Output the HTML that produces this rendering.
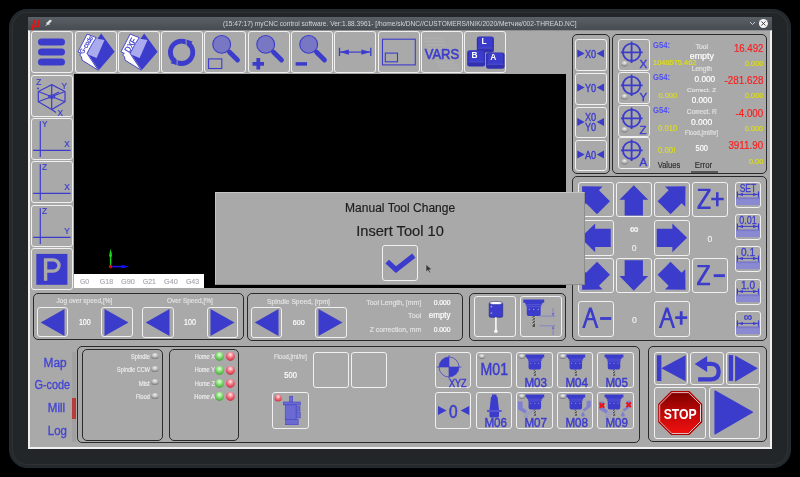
<!DOCTYPE html>
<html><head><meta charset="utf-8">
<style>
*{margin:0;padding:0;box-sizing:border-box}
html,body{width:800px;height:477px;overflow:hidden;background:#000;font-family:"Liberation Sans",sans-serif}
.a{position:absolute}
#frame{left:9px;top:9px;width:782px;height:459px;border-radius:18px;background:#232629;border:1px solid #1f2d36;box-shadow:inset 0 0 0 2px #26292c, inset 0 0 0 3px #2f3235}
#title{left:28px;top:17px;width:744px;height:13px;background:linear-gradient(#596066,#474c52)}
#content{left:28px;top:30px;width:744px;height:419px;background:#a9a9a9;border-left:2px solid #f0f0f0;border-right:2px solid #f0f0f0;border-bottom:2px solid #f0f0f0;border-top:1px solid #8e9092}
.b{position:absolute;border:1.5px solid #f0f0f0;border-radius:3px;background:#a9a9a9}
.p{position:absolute;border:1.6px solid #2a2a2a;border-radius:5px}
.s{position:absolute;overflow:visible;font-family:"Liberation Sans";will-change:transform}
</style></head><body>
<div id="frame" class="a"></div>
<div id="title" class="a"></div>
<div id="content" class="a"></div>
<svg width="0" height="0" style="position:absolute"><defs><radialGradient id="led" cx="0.5" cy="0.3" r="0.8"><stop offset="0" stop-color="#f2f2f2"/><stop offset="0.5" stop-color="#b4b4b4"/><stop offset="1" stop-color="#5a5a5a"/></radialGradient><radialGradient id="gled" cx="0.5" cy="0.3" r="0.75"><stop offset="0" stop-color="#e8ffe0"/><stop offset="0.5" stop-color="#7cd86c"/><stop offset="1" stop-color="#3a9a30"/></radialGradient><radialGradient id="rled" cx="0.5" cy="0.3" r="0.75"><stop offset="0" stop-color="#ffe8e8"/><stop offset="0.5" stop-color="#f06878"/><stop offset="1" stop-color="#c02838"/></radialGradient><linearGradient id="stopg" x1="0" y1="0" x2="0" y2="1"><stop offset="0" stop-color="#800000"/><stop offset="0.5" stop-color="#c00808"/><stop offset="1" stop-color="#f01010"/></linearGradient></defs></svg><svg class="s" style="left:28px;top:17px" width="30" height="13"><text x="3.8" y="9.9" font-family="Liberation Serif" font-style="italic" font-size="14.5" fill="#f01010" stroke="#f01010" stroke-width="0.45" textLength="8.4" lengthAdjust="spacingAndGlyphs">μ</text><path d="M17.6,9 L20.2,6.4" stroke="#e4e4e4" stroke-width="0.9"/><path d="M19.6,6.6 L22.4,3.9" stroke="#e4e4e4" stroke-width="2.4" stroke-linecap="round"/><path d="M18.9,5.3 L21.5,8" stroke="#e4e4e4" stroke-width="0.9"/></svg>
<svg class="s" style="left:745px;top:17px" width="27" height="13"><path d="M5,5 L7.5,7.5 L10,5" stroke="#c8ccd0" stroke-width="1" fill="none"/><circle cx="18.4" cy="6.5" r="4.5" fill="#f4f4f4"/><path d="M16.3,4.4 L20.5,8.6 M20.5,4.4 L16.3,8.6" stroke="#30343a" stroke-width="0.9"/></svg>
<div class="b" style="left:31px;top:31px;width:42px;height:42px"></div>
<svg class="s" style="left:31px;top:31px" width="42" height="42"><g stroke="#3c3ccc" stroke-width="7" stroke-linecap="round"><path d="M10.5,11 H30.5 M10.5,21 H30.5 M10.5,31 H30.5"/></g></svg>
<div class="b" style="left:74.5px;top:31px;width:42px;height:42px"></div>
<svg class="s" style="left:74.5px;top:31px" width="42" height="42"><path d="M26.2,2.5 L39.6,20.7 L23.9,39.1 L12.4,22z" fill="#3c3ccc"/><path d="M19.3,7.3 L29.5,9.1 L21.6,27.1 L12.4,23.2z" fill="#aaaaee"/><path d="M12.1,3.1 L21.2,6.6 L17.4,12.5 L12,22.4 L23.2,39.2 L7.2,29.3 L6.4,25.6 L4.6,24 L6.3,22.4 L3,20.8z" fill="#fff" stroke="#3c3ccc" stroke-width="0.9" stroke-linejoin="round"/><text transform="translate(11.2,13.6) rotate(-59)" x="0" y="2.52" text-anchor="middle" font-size="7" fill="#3c3ccc" stroke="#3c3ccc" stroke-width="0.25" textLength="19.5" lengthAdjust="spacingAndGlyphs">G-code</text></svg>
<div class="b" style="left:117.5px;top:31px;width:42px;height:42px"></div>
<svg class="s" style="left:117.5px;top:31px" width="42" height="42"><path d="M26.2,2.5 L39.6,20.7 L23.9,39.1 L12.4,22z" fill="#3c3ccc"/><path d="M19.3,7.3 L29.5,9.1 L21.6,27.1 L12.4,23.2z" fill="#aaaaee"/><path d="M12.1,3.1 L21.2,6.6 L17.4,12.5 L12,22.4 L23.2,39.2 L7.2,29.3 L6.4,25.6 L4.6,24 L6.3,22.4 L3,20.8z" fill="#fff" stroke="#3c3ccc" stroke-width="0.9" stroke-linejoin="round"/><text transform="translate(12.3,14.2) rotate(-59)" x="0" y="3.17" text-anchor="middle" font-size="8.8" fill="#3c3ccc" stroke="#3c3ccc" stroke-width="0.25" textLength="15" lengthAdjust="spacingAndGlyphs">DXF</text></svg>
<div class="b" style="left:161px;top:31px;width:42px;height:42px"></div>
<svg class="s" style="left:161px;top:31px" width="42" height="42"><circle cx="20.6" cy="21.3" r="11.2" fill="none" stroke="#3c3ccc" stroke-width="4.8"/><path d="M25.1,8.6 L31.6,10.4 L27,16.2z M16.1,34 L9.6,32.2 L14.2,26.4z" fill="#3c3ccc"/><path d="M25.1,8 L25.1,16 M16.1,26.6 L16.1,34.6" stroke="#a9a9a9" stroke-width="0.9"/></svg>
<div class="b" style="left:204px;top:31px;width:42px;height:42px"></div>
<svg class="s" style="left:204px;top:31px" width="42" height="42"><circle cx="17.7" cy="13.4" r="8.9" fill="#7777c4" stroke="#3c3ccc" stroke-width="1.1"/><path d="M25.4,21 L33.5,29" stroke="#3c3ccc" stroke-width="4.8" stroke-linecap="round"/><rect x="4.6" y="27.9" width="13.2" height="9.6" fill="none" stroke="#3c3ccc" stroke-width="1.1"/></svg>
<div class="b" style="left:248px;top:31px;width:42px;height:42px"></div>
<svg class="s" style="left:248px;top:31px" width="42" height="42"><circle cx="17.7" cy="13.4" r="8.9" fill="#7777c4" stroke="#3c3ccc" stroke-width="1.1"/><path d="M25.4,21 L33.5,29" stroke="#3c3ccc" stroke-width="4.8" stroke-linecap="round"/><path d="M4.5,32.9 H16 M10.3,27 V38.6" stroke="#3c3ccc" stroke-width="3.8"/></svg>
<div class="b" style="left:291px;top:31px;width:42px;height:42px"></div>
<svg class="s" style="left:291px;top:31px" width="42" height="42"><circle cx="17.7" cy="13.4" r="8.9" fill="#7777c4" stroke="#3c3ccc" stroke-width="1.1"/><path d="M25.4,21 L33.5,29" stroke="#3c3ccc" stroke-width="4.8" stroke-linecap="round"/><path d="M4.6,32.9 H16" stroke="#3c3ccc" stroke-width="3.5"/></svg>
<div class="b" style="left:334px;top:31px;width:42px;height:42px"></div>
<svg class="s" style="left:334px;top:31px" width="42" height="42"><path d="M5.5,16.8 V25 M36.8,16.8 V25" stroke="#3c3ccc" stroke-width="1.3"/><path d="M6,21.1 H36" stroke="#3c3ccc" stroke-width="1.2"/><path d="M5.8,21.1 L14.9,18.4 L14.9,23.8z M36.5,21.1 L27.4,18.4 L27.4,23.8z" fill="#3c3ccc"/></svg>
<div class="b" style="left:378px;top:31px;width:42px;height:42px"></div>
<svg class="s" style="left:378px;top:31px" width="42" height="42"><rect x="4.5" y="8.2" width="32.8" height="25.7" fill="none" stroke="#3c3ccc" stroke-width="1.1"/><rect x="7.3" y="22.1" width="12.2" height="8.7" fill="none" stroke="#3c3ccc" stroke-width="1.1"/></svg>
<div class="b" style="left:421px;top:31px;width:42px;height:42px"></div>
<svg class="s" style="left:421px;top:31px" width="42" height="42"><rect x="2.5" y="6.5" width="19" height="1.1" fill="#b1b1b1"/><rect x="4" y="10" width="19" height="1.1" fill="#b1b1b1"/><rect x="6" y="13.5" width="19" height="1.1" fill="#b1b1b1"/><rect x="8" y="17" width="18" height="1.1" fill="#b1b1b1"/><rect x="15" y="30.5" width="18" height="1.1" fill="#b1b1b1"/><rect x="17" y="33.5" width="19" height="1.1" fill="#b1b1b1"/><rect x="18.5" y="36.5" width="20" height="1.1" fill="#b1b1b1"/><text x="3.7" y="27.7" font-size="14.8" fill="#3c3ccc" stroke="#3c3ccc" stroke-width="0.6" textLength="34.4" lengthAdjust="spacingAndGlyphs">VARS</text></svg>
<div class="b" style="left:464px;top:31px;width:42px;height:42px"></div>
<svg class="s" style="left:464px;top:31px" width="42" height="42"><rect x="12.8" y="5.5" width="17.1" height="16.1" rx="2.5" fill="#3030b0"/><rect x="14.4" y="6.0" width="13.900000000000002" height="10.626000000000001" rx="1.5" fill="#3c3ccc"/><path d="M13.8,17.092 H28.900000000000002" stroke="#6a6ae0" stroke-width="0.6"/><text x="17.6" y="13" font-size="8.4" font-weight="bold" fill="#fff">L</text><rect x="3.2" y="19.3" width="18" height="16.1" rx="2.5" fill="#3030b0"/><rect x="4.800000000000001" y="19.8" width="14.8" height="10.626000000000001" rx="1.5" fill="#3c3ccc"/><path d="M4.2,30.892000000000003 H20.2" stroke="#6a6ae0" stroke-width="0.6"/><text x="7.4" y="26.9" font-size="8.4" font-weight="bold" fill="#fff">B</text><rect x="22" y="21.6" width="18.6" height="16.1" rx="2.5" fill="#3030b0"/><rect x="23.6" y="22.1" width="15.400000000000002" height="10.626000000000001" rx="1.5" fill="#3c3ccc"/><path d="M23,33.192 H39.6" stroke="#6a6ae0" stroke-width="0.6"/><text x="26.2" y="29" font-size="8.4" font-weight="bold" fill="#fff">A</text></svg>
<div class="b" style="left:31px;top:75px;width:42px;height:42px"></div>
<svg class="s" style="left:31px;top:75px" width="42" height="42"><g fill="none" stroke="#3c3ccc" stroke-width="1.2"><path d="M20.7,9.6 L34,16.5 L34,26.7 L20.7,34.5 L7.3,26.7 L7.3,16.5z"/><path d="M20.7,9.6 V34.5 M7.3,16.5 L34,26.7 M34,16.5 L7.3,26.7"/><ellipse cx="20.7" cy="21.6" rx="3" ry="1.6"/><path d="M20.7,34.5 L25,37.5"/><path d="M22,20 L28,17"/></g><circle cx="7" cy="13.5" r="0.9" fill="#3c3ccc"/><g fill="#3c3ccc" stroke="#3c3ccc" stroke-width="0.2"><text x="5.2" y="10" font-size="8.3">Z</text><text x="30.6" y="13.8" font-size="8.3">Y</text><text x="26.6" y="41" font-size="8.3">X</text></g></svg>
<div class="b" style="left:31px;top:118px;width:42px;height:42px"></div>
<svg class="s" style="left:31px;top:118px" width="42" height="42"><path d="M9.3,3.2 V39.1 M2.2,32.4 H39.6" stroke="#3c3ccc" stroke-width="1.2"/><text x="11.1" y="9.2" font-size="8.3" fill="#3c3ccc" stroke="#3c3ccc" stroke-width="0.2">Y</text><text x="33.2" y="29.4" font-size="8.3" fill="#3c3ccc" stroke="#3c3ccc" stroke-width="0.2">X</text></svg>
<div class="b" style="left:31px;top:161.2px;width:42px;height:42px"></div>
<svg class="s" style="left:31px;top:161.2px" width="42" height="42"><path d="M9.3,3.2 V39.1 M2.2,32.4 H39.6" stroke="#3c3ccc" stroke-width="1.2"/><text x="11.1" y="9.2" font-size="8.3" fill="#3c3ccc" stroke="#3c3ccc" stroke-width="0.2">Z</text><text x="33.2" y="29.4" font-size="8.3" fill="#3c3ccc" stroke="#3c3ccc" stroke-width="0.2">X</text></svg>
<div class="b" style="left:31px;top:204.7px;width:42px;height:42px"></div>
<svg class="s" style="left:31px;top:204.7px" width="42" height="42"><path d="M9.3,3.2 V39.1 M2.2,32.4 H39.6" stroke="#3c3ccc" stroke-width="1.2"/><text x="11.1" y="9.2" font-size="8.3" fill="#3c3ccc" stroke="#3c3ccc" stroke-width="0.2">Z</text><text x="33.2" y="29.4" font-size="8.3" fill="#3c3ccc" stroke="#3c3ccc" stroke-width="0.2">Y</text></svg>
<div class="b" style="left:31px;top:247.8px;width:42px;height:42px"></div>
<svg class="s" style="left:31px;top:247.8px" width="42" height="42"><rect x="5.3" y="5.9" width="31.1" height="30.9" fill="#3c3ccc"/><path d="M14.6,32.7 V11.9 H22 A6,5.6 0 0 1 22,23.1 H14.6" fill="none" stroke="#a9a9a9" stroke-width="3.4"/></svg>
<div class="a" style="left:74px;top:74px;width:492px;height:214px;background:#000"></div>
<div class="a" style="left:74px;top:274px;width:129.6px;height:13.9px;background:#fff"></div>
<svg class="s" style="left:100px;top:245px" width="35" height="30"><path d="M10.6,21.5 V7" stroke="#18d818" stroke-width="1.5"/><path d="M10.6,3.6 L9,11.5 L12.2,11.5z" fill="#18d818"/><path d="M11,21.6 H25" stroke="#1414ff" stroke-width="1.5"/><path d="M29.4,21.6 L21.5,20 L21.5,23.2z" fill="#1414ff"/><circle cx="10.6" cy="21.6" r="1.8" fill="#c81010"/></svg>
<div class="p" style="left:571.5px;top:33.5px;width:38px;height:140px"></div>
<div class="b" style="left:575px;top:39.3px;width:31.5px;height:31.5px"></div>
<svg class="s" style="left:575px;top:39.3px" width="31.5" height="31.5"><path d="M2.2,10.4 L9.7,14.5 L2.2,18.6z M29,10.4 L21.7,14.5 L29,18.6z" fill="#3c3ccc"/><text x="10" y="18.7" font-size="11.2" fill="#3c3ccc" stroke="#3c3ccc" stroke-width="0.4" textLength="11.2" lengthAdjust="spacingAndGlyphs">X0</text></svg>
<div class="b" style="left:575px;top:73px;width:31.5px;height:31.5px"></div>
<svg class="s" style="left:575px;top:73px" width="31.5" height="31.5"><path d="M2.2,10.4 L9.7,14.5 L2.2,18.6z M29,10.4 L21.7,14.5 L29,18.6z" fill="#3c3ccc"/><text x="10" y="18.7" font-size="11.2" fill="#3c3ccc" stroke="#3c3ccc" stroke-width="0.4" textLength="11.2" lengthAdjust="spacingAndGlyphs">Y0</text></svg>
<div class="b" style="left:575px;top:106.7px;width:31.5px;height:31.5px"></div>
<svg class="s" style="left:575px;top:106.7px" width="31.5" height="31.5"><path d="M2.2,10.9 L9.7,15 L2.2,19.1z M29,10.9 L21.7,15 L29,19.1z" fill="#3c3ccc"/><text x="10" y="13.6" font-size="11.2" fill="#3c3ccc" stroke="#3c3ccc" stroke-width="0.4" textLength="11.2" lengthAdjust="spacingAndGlyphs">X0</text><text x="10" y="23.6" font-size="11.2" fill="#3c3ccc" stroke="#3c3ccc" stroke-width="0.4" textLength="11.2" lengthAdjust="spacingAndGlyphs">Y0</text></svg>
<div class="b" style="left:575px;top:140.3px;width:31.5px;height:30.5px"></div>
<svg class="s" style="left:575px;top:140.3px" width="31.5" height="30.5"><path d="M2.2,10.4 L9.7,14.5 L2.2,18.6z M29,10.4 L21.7,14.5 L29,18.6z" fill="#3c3ccc"/><text x="10" y="18.7" font-size="11.2" fill="#3c3ccc" stroke="#3c3ccc" stroke-width="0.4" textLength="11.2" lengthAdjust="spacingAndGlyphs">A0</text></svg>
<div class="p" style="left:612px;top:33.5px;width:154.5px;height:140px"></div>
<div class="b" style="left:618px;top:39.3px;width:32px;height:31.5px"></div>
<svg class="s" style="left:618px;top:39.3px" width="32" height="31.5"><g stroke="#3c3ccc" stroke-width="1.8" fill="none"><circle cx="13.6" cy="13.3" r="8.7"/><path d="M2.9,13.3 H24.7 M13.6,2.4 V24"/></g><ellipse cx="6.5" cy="24.8" rx="3.5" ry="2.7" fill="url(#led)"/><text x="21.5" y="29.3" font-size="11.5" fill="#3c3ccc" stroke="#3c3ccc" stroke-width="0.4">X</text></svg>
<div class="b" style="left:618px;top:72.3px;width:32px;height:31.5px"></div>
<svg class="s" style="left:618px;top:72.3px" width="32" height="31.5"><g stroke="#3c3ccc" stroke-width="1.8" fill="none"><circle cx="13.6" cy="13.3" r="8.7"/><path d="M2.9,13.3 H24.7 M13.6,2.4 V24"/></g><ellipse cx="6.5" cy="24.8" rx="3.5" ry="2.7" fill="url(#led)"/><text x="21.5" y="29.3" font-size="11.5" fill="#3c3ccc" stroke="#3c3ccc" stroke-width="0.4">Y</text></svg>
<div class="b" style="left:618px;top:105px;width:32px;height:31.5px"></div>
<svg class="s" style="left:618px;top:105px" width="32" height="31.5"><g stroke="#3c3ccc" stroke-width="1.8" fill="none"><circle cx="13.6" cy="13.3" r="8.7"/><path d="M2.9,13.3 H24.7 M13.6,2.4 V24"/></g><ellipse cx="6.5" cy="24.8" rx="3.5" ry="2.7" fill="url(#led)"/><text x="21.5" y="29.3" font-size="11.5" fill="#3c3ccc" stroke="#3c3ccc" stroke-width="0.4">Z</text></svg>
<div class="b" style="left:618px;top:137.4px;width:32px;height:31.5px"></div>
<svg class="s" style="left:618px;top:137.4px" width="32" height="31.5"><g stroke="#3c3ccc" stroke-width="1.8" fill="none"><circle cx="13.6" cy="13.3" r="8.7"/><path d="M2.9,13.3 H24.7 M13.6,2.4 V24"/></g><ellipse cx="6.5" cy="24.8" rx="3.5" ry="2.7" fill="url(#led)"/><text x="21.5" y="29.3" font-size="11.5" fill="#3c3ccc" stroke="#3c3ccc" stroke-width="0.4">A</text></svg>
<div class="a" style="left:691px;top:170.8px;width:27px;height:2.6px;background:#585858"></div>
<div class="p" style="left:572px;top:175.7px;width:195px;height:165px"></div>
<div class="b" style="left:578px;top:181.7px;width:35.6px;height:35.8px"></div>
<svg class="s" style="left:578px;top:181.7px" width="35.6" height="35.8"><path d="M0,-15.15 L14.35,-0.45 L9.15,-0.45 L9.15,15.15 L-9.15,15.15 L-9.15,-0.45 L-14.35,-0.45z" fill="#3c3ccc" transform="translate(14.8,15.0) rotate(-45)"/></svg>
<div class="b" style="left:616.3px;top:181.7px;width:35.6px;height:35.8px"></div>
<svg class="s" style="left:616.3px;top:181.7px" width="35.6" height="35.8"><path d="M0,-15.15 L14.35,-0.45 L9.15,-0.45 L9.15,15.15 L-9.15,15.15 L-9.15,-0.45 L-14.35,-0.45z" fill="#3c3ccc" transform="translate(17.8,18.3) rotate(0)"/></svg>
<div class="b" style="left:654.2px;top:181.7px;width:35.6px;height:35.8px"></div>
<svg class="s" style="left:654.2px;top:181.7px" width="35.6" height="35.8"><path d="M0,-15.15 L14.35,-0.45 L9.15,-0.45 L9.15,15.15 L-9.15,15.15 L-9.15,-0.45 L-14.35,-0.45z" fill="#3c3ccc" transform="translate(20.8,15.0) rotate(45)"/></svg>
<div class="b" style="left:578px;top:219.8px;width:35.6px;height:35.8px"></div>
<svg class="s" style="left:578px;top:219.8px" width="35.6" height="35.8"><path d="M0,-15.15 L14.35,-0.45 L9.15,-0.45 L9.15,15.15 L-9.15,15.15 L-9.15,-0.45 L-14.35,-0.45z" fill="#3c3ccc" transform="translate(17.6,17.8) rotate(-90)"/></svg>
<div class="b" style="left:654.2px;top:219.8px;width:35.6px;height:35.8px"></div>
<svg class="s" style="left:654.2px;top:219.8px" width="35.6" height="35.8"><path d="M0,-15.15 L14.35,-0.45 L9.15,-0.45 L9.15,15.15 L-9.15,15.15 L-9.15,-0.45 L-14.35,-0.45z" fill="#3c3ccc" transform="translate(17.9,17.8) rotate(90)"/></svg>
<div class="b" style="left:578px;top:257.5px;width:35.6px;height:35.8px"></div>
<svg class="s" style="left:578px;top:257.5px" width="35.6" height="35.8"><path d="M0,-15.15 L14.35,-0.45 L9.15,-0.45 L9.15,15.15 L-9.15,15.15 L-9.15,-0.45 L-14.35,-0.45z" fill="#3c3ccc" transform="translate(14.8,21.0) rotate(-135)"/></svg>
<div class="b" style="left:616.3px;top:257.5px;width:35.6px;height:35.8px"></div>
<svg class="s" style="left:616.3px;top:257.5px" width="35.6" height="35.8"><path d="M0,-15.15 L14.35,-0.45 L9.15,-0.45 L9.15,15.15 L-9.15,15.15 L-9.15,-0.45 L-14.35,-0.45z" fill="#3c3ccc" transform="translate(17.8,17.5) rotate(180)"/></svg>
<div class="b" style="left:654.2px;top:257.5px;width:35.6px;height:35.8px"></div>
<svg class="s" style="left:654.2px;top:257.5px" width="35.6" height="35.8"><path d="M0,-15.15 L14.35,-0.45 L9.15,-0.45 L9.15,15.15 L-9.15,15.15 L-9.15,-0.45 L-14.35,-0.45z" fill="#3c3ccc" transform="translate(20.8,21.0) rotate(135)"/></svg>
<div class="b" style="left:692px;top:181.7px;width:35.6px;height:35.8px"></div>
<svg class="s" style="left:692px;top:181.7px" width="35.6" height="35.8"><path d="M5.9,6.7 H18.6 V9.1 L8.7,24.6 H18.6 V27 H5.4 V24.6 L15.3,9.1 H5.9z" fill="#3c3ccc"/><path d="M19.3,17 H31.7 M25.3,10.3 V24.2" stroke="#3c3ccc" stroke-width="2.6"/></svg>
<div class="b" style="left:692px;top:257.5px;width:35.6px;height:35.8px"></div>
<svg class="s" style="left:692px;top:257.5px" width="35.6" height="35.8"><path d="M5.4,6.9 H17.8 V9.3 L8.3,24.8 H18.1 V27.2 H5 V24.8 L14.5,9.3 H5.4z" fill="#3c3ccc"/><path d="M21.7,17.65 H32.9" stroke="#3c3ccc" stroke-width="2.9"/></svg>
<div class="b" style="left:578px;top:301px;width:36px;height:36.4px"></div>
<svg class="s" style="left:578px;top:301px" width="36" height="36.4"><path transform="translate(0,0)" fill-rule="evenodd" fill="#3c3ccc" d="M4.2,26.9 L11.1,6.6 L13.7,6.6 L20.5,26.9 L17.8,26.9 L15.3,19.3 L9.4,19.3 L6.9,26.9z M10.2,16.9 L14.5,16.9 L12.35,10.4z"/><path d="M22.1,17.5 H33.3" stroke="#3c3ccc" stroke-width="2.8"/></svg>
<div class="b" style="left:653.7px;top:301px;width:36px;height:36.4px"></div>
<svg class="s" style="left:653.7px;top:301px" width="36" height="36.4"><path transform="translate(0.6,0)" fill-rule="evenodd" fill="#3c3ccc" d="M4.2,26.9 L11.1,6.6 L13.7,6.6 L20.5,26.9 L17.8,26.9 L15.3,19.3 L9.4,19.3 L6.9,26.9z M10.2,16.9 L14.5,16.9 L12.35,10.4z"/><path d="M21.2,16.6 H33.2 M27.2,10.2 V23.7" stroke="#3c3ccc" stroke-width="2.8"/></svg>
<div class="b" style="left:735px;top:181.7px;width:26px;height:26px"></div>
<svg class="s" style="left:735px;top:181.7px" width="26" height="26"><rect x="1.1" y="15.5" width="23.8" height="7.6" fill="#8a8ad2"/><rect x="1.1" y="15.5" width="23.8" height="1.6" fill="#7a7ac8"/><path d="M2.4,9.5 V15.5 M23.5,9.5 V15.5" stroke="#3c3ccc" stroke-width="1.2"/><path d="M3,12.4 H23" stroke="#3c3ccc" stroke-width="1"/><path d="M2.8,12.4 L8,10.9 L8,13.9z M23.2,12.4 L18,10.9 L18,13.9z" fill="#3c3ccc"/><text x="13" y="10" text-anchor="middle" font-size="10.5" fill="#3c3ccc" stroke="#3c3ccc" stroke-width="0.3" textLength="16.7" lengthAdjust="spacingAndGlyphs">SET</text></svg>
<div class="b" style="left:735px;top:214.3px;width:26px;height:25.6px"></div>
<svg class="s" style="left:735px;top:214.3px" width="26" height="25.6"><rect x="1.1" y="15.5" width="23.8" height="7.6" fill="#8a8ad2"/><rect x="1.1" y="15.5" width="23.8" height="1.6" fill="#7a7ac8"/><path d="M2.4,9.5 V15.5 M23.5,9.5 V15.5" stroke="#3c3ccc" stroke-width="1.2"/><path d="M3,12.4 H23" stroke="#3c3ccc" stroke-width="1"/><path d="M2.8,12.4 L8,10.9 L8,13.9z M23.2,12.4 L18,10.9 L18,13.9z" fill="#3c3ccc"/><text x="13" y="10" text-anchor="middle" font-size="10.5" fill="#3c3ccc" stroke="#3c3ccc" stroke-width="0.3" textLength="17.5" lengthAdjust="spacingAndGlyphs">0.01</text></svg>
<div class="b" style="left:735px;top:246.4px;width:26px;height:26px"></div>
<svg class="s" style="left:735px;top:246.4px" width="26" height="26"><rect x="1.1" y="15.5" width="23.8" height="7.6" fill="#8a8ad2"/><rect x="1.1" y="15.5" width="23.8" height="1.6" fill="#7a7ac8"/><path d="M2.4,9.5 V15.5 M23.5,9.5 V15.5" stroke="#3c3ccc" stroke-width="1.2"/><path d="M3,12.4 H23" stroke="#3c3ccc" stroke-width="1"/><path d="M2.8,12.4 L8,10.9 L8,13.9z M23.2,12.4 L18,10.9 L18,13.9z" fill="#3c3ccc"/><text x="13" y="10" text-anchor="middle" font-size="10.5" fill="#3c3ccc" stroke="#3c3ccc" stroke-width="0.3" textLength="14" lengthAdjust="spacingAndGlyphs">0.1</text></svg>
<div class="b" style="left:735px;top:279px;width:26px;height:26px"></div>
<svg class="s" style="left:735px;top:279px" width="26" height="26"><rect x="1.1" y="15.5" width="23.8" height="7.6" fill="#8a8ad2"/><rect x="1.1" y="15.5" width="23.8" height="1.6" fill="#7a7ac8"/><path d="M2.4,9.5 V15.5 M23.5,9.5 V15.5" stroke="#3c3ccc" stroke-width="1.2"/><path d="M3,12.4 H23" stroke="#3c3ccc" stroke-width="1"/><path d="M2.8,12.4 L8,10.9 L8,13.9z M23.2,12.4 L18,10.9 L18,13.9z" fill="#3c3ccc"/><text x="13" y="10" text-anchor="middle" font-size="10.5" fill="#3c3ccc" stroke="#3c3ccc" stroke-width="0.3" textLength="14" lengthAdjust="spacingAndGlyphs">1.0</text></svg>
<div class="b" style="left:735px;top:311.3px;width:26px;height:26px"></div>
<svg class="s" style="left:735px;top:311.3px" width="26" height="26"><rect x="1.1" y="15.5" width="23.8" height="7.6" fill="#8a8ad2"/><rect x="1.1" y="15.5" width="23.8" height="1.6" fill="#7a7ac8"/><path d="M2.4,9.5 V15.5 M23.5,9.5 V15.5" stroke="#3c3ccc" stroke-width="1.2"/><path d="M3,12.4 H23" stroke="#3c3ccc" stroke-width="1"/><path d="M2.8,12.4 L8,10.9 L8,13.9z M23.2,12.4 L18,10.9 L18,13.9z" fill="#3c3ccc"/><text x="13" y="10" text-anchor="middle" font-size="12" fill="#3c3ccc" stroke="#3c3ccc" stroke-width="0.3">∞</text></svg>
<svg class="s" style="left:600px;top:220px" width="120" height="110"></svg>
<div class="a" style="left:215px;top:192px;width:370px;height:92.5px;background:#a9a9a9;border-left:1px solid #c4c4c4;border-top:1px solid #c4c4c4;border-right:1px solid #8c8c8c;border-bottom:1px solid #8c8c8c"></div>
<div class="b" style="left:382px;top:245px;width:35.6px;height:35.6px"></div>
<svg class="s" style="left:382px;top:245px" width="35.6" height="35.6"><path d="M5.2,16.6 L14,24.6 L31.8,10.6" fill="none" stroke="#3c3ccc" stroke-width="5.2"/></svg>
<svg class="s" style="left:425px;top:264px" width="8" height="10"><path d="M1,0.5 L1,8 L3,6.2 L4.5,9 L5.6,8.4 L4.3,5.8 L7,5.6z" fill="#3a3a3a" stroke="#cfcfcf" stroke-width="0.4"/></svg>
<div class="p" style="left:33px;top:293.3px;width:210.6px;height:47px"></div>
<div class="b" style="left:36.5px;top:306.8px;width:31.3px;height:30.6px"></div>
<svg class="s" style="left:36.5px;top:306.8px" width="31.3" height="30.6"><path d="M27.5,2 L27.5,29 L3.7,15.5z" fill="#3c3ccc"/></svg>
<div class="b" style="left:101.1px;top:306.8px;width:31.7px;height:30.6px"></div>
<svg class="s" style="left:101.1px;top:306.8px" width="31.7" height="30.6"><path d="M3.5,2 L3.5,29 L27.5,15.5z" fill="#3c3ccc"/></svg>
<div class="b" style="left:142px;top:307px;width:31.5px;height:30.6px"></div>
<svg class="s" style="left:142px;top:307px" width="31.5" height="30.6"><path d="M27.5,2 L27.5,29 L3.7,15.5z" fill="#3c3ccc"/></svg>
<div class="b" style="left:207.2px;top:307px;width:30.8px;height:30.6px"></div>
<svg class="s" style="left:207.2px;top:307px" width="30.8" height="30.6"><path d="M3.5,2 L3.5,29 L27.5,15.5z" fill="#3c3ccc"/></svg>
<div class="p" style="left:247.2px;top:293.3px;width:216px;height:47.5px"></div>
<div class="b" style="left:251px;top:306.7px;width:31px;height:31px"></div>
<svg class="s" style="left:251px;top:306.7px" width="31" height="31"><path d="M27.5,2 L27.5,29 L3.7,15.5z" fill="#3c3ccc"/></svg>
<div class="b" style="left:315.4px;top:306.7px;width:31.6px;height:31px"></div>
<svg class="s" style="left:315.4px;top:306.7px" width="31.6" height="31"><path d="M3.5,2 L3.5,29 L27.5,15.5z" fill="#3c3ccc"/></svg>
<div class="p" style="left:469.3px;top:293.3px;width:96.7px;height:47.4px"></div>
<div class="b" style="left:473.6px;top:296.2px;width:42px;height:41.2px"></div>
<svg class="s" style="left:473.6px;top:296.2px" width="42" height="41.2"><rect x="15.2" y="6.3" width="13.5" height="15" rx="1.5" fill="#3c3ccc" stroke="#202080" stroke-width="0.6"/><ellipse cx="21.95" cy="7" rx="6.6" ry="1.6" fill="#fff" stroke="#202080" stroke-width="0.5"/><circle cx="17.4" cy="10.6" r="0.9" fill="#9a9ad8"/><circle cx="17.4" cy="17.1" r="0.9" fill="#9a9ad8"/><path d="M21.9,21.3 V34.5" stroke="#fff" stroke-width="1.5"/><circle cx="21.9" cy="35.2" r="1.7" fill="#fff"/></svg>
<div class="b" style="left:519.6px;top:296.2px;width:42px;height:41.2px"></div>
<svg class="s" style="left:519.6px;top:296.2px" width="42" height="41.2"><g transform="translate(3.3,3.4) scale(1.0)"><path d="M0,0 H20.9 V3.4 L19,3.4 L19,5 L18,5 L18,7 L17.4,7 L17.4,14.5 Q17.4,16.7 15.2,16.7 L5.7,16.7 Q3.5,16.7 3.5,14.5 L3.5,7 L2.9,7 L2.9,5 L1.9,5 L1.9,3.4 L0,3.4z" fill="#3c3ccc"/><path d="M2.5,5.2 H18.4 M3,7.2 H18" stroke="#7070d8" stroke-width="0.5"/><circle cx="6" cy="9.8" r="0.55" fill="#ccccf0"/><circle cx="10.45" cy="9.8" r="0.55" fill="#ccccf0"/><circle cx="14.9" cy="9.8" r="0.55" fill="#ccccf0"/><path d="M9.3,16.7 L11.7,16.7 L11.7,27.6 L9.3,27.6z" fill="#505050"/><path d="M9,19.5 L12,17.3" stroke="#e0e0e0" stroke-width="0.8"/><path d="M9,22.3 L12,20.1" stroke="#e0e0e0" stroke-width="0.8"/><path d="M9,25.099999999999998 L12,22.9" stroke="#e0e0e0" stroke-width="0.8"/></g><g stroke="#6a6ad8" stroke-width="0.6" fill="none"><path d="M19.6,20.1 H35.2 M19.6,29.8 H35.2 M33.1,12 V20 M33.1,30 V39"/></g><path d="M33.1,20 L31.8,17 L34.4,17z M33.1,29.9 L31.8,32.9 L34.4,32.9z" fill="#6a6ad8"/></svg>
<div class="a" style="left:72px;top:352px;width:4.2px;height:89.5px;background:#a0a0a0"></div>
<div class="a" style="left:71.9px;top:397.8px;width:4.3px;height:21.7px;background:#b83c3c"></div>
<div class="p" style="left:76.5px;top:346px;width:563px;height:96.5px"></div>
<div class="p" style="left:82px;top:348.8px;width:81px;height:92.2px"></div>
<div class="p" style="left:168.5px;top:348.8px;width:70.1px;height:92.2px"></div>
<svg class="s" style="left:150.9px;top:352.9px" width="8" height="6"><ellipse cx="3.9" cy="3" rx="3.9" ry="3" fill="url(#led)"/></svg>
<svg class="s" style="left:150.9px;top:365.9px" width="8" height="6"><ellipse cx="3.9" cy="3" rx="3.9" ry="3" fill="url(#led)"/></svg>
<svg class="s" style="left:150.9px;top:379px" width="8" height="6"><ellipse cx="3.9" cy="3" rx="3.9" ry="3" fill="url(#led)"/></svg>
<svg class="s" style="left:150.9px;top:393.1px" width="8" height="6"><ellipse cx="3.9" cy="3" rx="3.9" ry="3" fill="url(#led)"/></svg>
<svg class="s" style="left:215.2px;top:352.05px" width="22" height="9"><circle cx="4.45" cy="4.45" r="4.45" fill="url(#gled)"/><circle cx="15.4" cy="4.45" r="4.45" fill="url(#rled)"/></svg>
<svg class="s" style="left:215.2px;top:365.65000000000003px" width="22" height="9"><circle cx="4.45" cy="4.45" r="4.45" fill="url(#gled)"/><circle cx="15.4" cy="4.45" r="4.45" fill="url(#rled)"/></svg>
<svg class="s" style="left:215.2px;top:379.05px" width="22" height="9"><circle cx="4.45" cy="4.45" r="4.45" fill="url(#gled)"/><circle cx="15.4" cy="4.45" r="4.45" fill="url(#rled)"/></svg>
<svg class="s" style="left:215.2px;top:392.35px" width="22" height="9"><circle cx="4.45" cy="4.45" r="4.45" fill="url(#gled)"/><circle cx="15.4" cy="4.45" r="4.45" fill="url(#rled)"/></svg>
<div class="b" style="left:313px;top:352px;width:36.3px;height:36px"></div>
<div class="b" style="left:350.7px;top:352px;width:36.3px;height:36px"></div>
<div class="b" style="left:272px;top:392px;width:36.7px;height:36.7px"></div>
<svg class="s" style="left:272px;top:392px" width="36.7" height="36.7"><circle cx="6.1" cy="6" r="3.6" fill="url(#rled)"/><g fill="#6a6ad0" stroke="#4444cc" stroke-width="0.6"><rect x="17.7" y="4.2" width="3" height="6"/><rect x="11.5" y="10" width="16.8" height="2.9"/><rect x="13.2" y="12.9" width="11" height="14.7"/><rect x="24.2" y="14" width="3.8" height="5"/><rect x="24.2" y="20" width="4" height="6"/><rect x="13.6" y="27.6" width="12.6" height="5.1"/></g></svg>
<div class="b" style="left:435px;top:351.5px;width:36.3px;height:36.5px"></div>
<svg class="s" style="left:435px;top:351.5px" width="36.3" height="36.5"><path d="M14,15 V5 A10,10 0 0 0 4,15z M14,15 H24 A10,10 0 0 1 14,25z" fill="#3c3ccc"/><circle cx="14" cy="15" r="10" fill="none" stroke="#3c3ccc" stroke-width="0.7"/><path d="M1.5,15 H26.5 M14,3 V27" stroke="#3c3ccc" stroke-width="0.7"/><text x="22.8" y="35.3" text-anchor="middle" font-size="10.2" fill="#3c3ccc" stroke="#3c3ccc" stroke-width="0.45" textLength="17.5" lengthAdjust="spacingAndGlyphs">XYZ</text></svg>
<div class="b" style="left:475.5px;top:351.5px;width:36.5px;height:36.5px"></div>
<svg class="s" style="left:475.5px;top:351.5px" width="36.5" height="36.5"><ellipse cx="5.8" cy="4.5" rx="3.3" ry="2.4" fill="url(#led)"/><text x="18.25" y="22.6" text-anchor="middle" font-size="16" fill="#3c3ccc" stroke="#3c3ccc" stroke-width="0.45" textLength="27.5" lengthAdjust="spacingAndGlyphs">M01</text></svg>
<div class="b" style="left:516px;top:351.5px;width:36.5px;height:36.5px"></div>
<svg class="s" style="left:516px;top:351.5px" width="36.5" height="36.5"><ellipse cx="5.8" cy="4.5" rx="3.3" ry="2.4" fill="url(#led)"/><g transform="translate(9.4,2.5) scale(0.9)"><path d="M0,0 H20.9 V3.4 L19,3.4 L19,5 L18,5 L18,7 L17.4,7 L17.4,14.5 Q17.4,16.7 15.2,16.7 L5.7,16.7 Q3.5,16.7 3.5,14.5 L3.5,7 L2.9,7 L2.9,5 L1.9,5 L1.9,3.4 L0,3.4z" fill="#3c3ccc"/><path d="M2.5,5.2 H18.4 M3,7.2 H18" stroke="#7070d8" stroke-width="0.5"/><circle cx="6" cy="9.8" r="0.55" fill="#ccccf0"/><circle cx="10.45" cy="9.8" r="0.55" fill="#ccccf0"/><circle cx="14.9" cy="9.8" r="0.55" fill="#ccccf0"/><path d="M9.3,16.7 L11.7,16.7 L11.7,23.6 L9.3,23.6z" fill="#505050"/><path d="M9,19.5 L12,17.3" stroke="#e0e0e0" stroke-width="0.8"/><path d="M9,22.3 L12,20.1" stroke="#e0e0e0" stroke-width="0.8"/></g><text x="19.7" y="35.2" text-anchor="middle" font-size="12.6" fill="#3c3ccc" stroke="#3c3ccc" stroke-width="0.45" textLength="22.6" lengthAdjust="spacingAndGlyphs">M03</text></svg>
<div class="b" style="left:556.5px;top:351.5px;width:36.3px;height:36.5px"></div>
<svg class="s" style="left:556.5px;top:351.5px" width="36.3" height="36.5"><ellipse cx="5.8" cy="4.5" rx="3.3" ry="2.4" fill="url(#led)"/><g transform="translate(9.4,2.5) scale(0.9)"><path d="M0,0 H20.9 V3.4 L19,3.4 L19,5 L18,5 L18,7 L17.4,7 L17.4,14.5 Q17.4,16.7 15.2,16.7 L5.7,16.7 Q3.5,16.7 3.5,14.5 L3.5,7 L2.9,7 L2.9,5 L1.9,5 L1.9,3.4 L0,3.4z" fill="#3c3ccc"/><path d="M2.5,5.2 H18.4 M3,7.2 H18" stroke="#7070d8" stroke-width="0.5"/><circle cx="6" cy="9.8" r="0.55" fill="#ccccf0"/><circle cx="10.45" cy="9.8" r="0.55" fill="#ccccf0"/><circle cx="14.9" cy="9.8" r="0.55" fill="#ccccf0"/><path d="M9.3,16.7 L11.7,16.7 L11.7,23.6 L9.3,23.6z" fill="#505050"/><path d="M9,19.5 L12,17.3" stroke="#e0e0e0" stroke-width="0.8"/><path d="M9,22.3 L12,20.1" stroke="#e0e0e0" stroke-width="0.8"/></g><text x="19.7" y="35.2" text-anchor="middle" font-size="12.6" fill="#3c3ccc" stroke="#3c3ccc" stroke-width="0.45" textLength="22.6" lengthAdjust="spacingAndGlyphs">M04</text></svg>
<div class="b" style="left:597px;top:351.5px;width:36.5px;height:36.5px"></div>
<svg class="s" style="left:597px;top:351.5px" width="36.5" height="36.5"><g transform="translate(7.6,2.5) scale(0.9)"><path d="M0,0 H20.9 V3.4 L19,3.4 L19,5 L18,5 L18,7 L17.4,7 L17.4,14.5 Q17.4,16.7 15.2,16.7 L5.7,16.7 Q3.5,16.7 3.5,14.5 L3.5,7 L2.9,7 L2.9,5 L1.9,5 L1.9,3.4 L0,3.4z" fill="#3c3ccc"/><path d="M2.5,5.2 H18.4 M3,7.2 H18" stroke="#7070d8" stroke-width="0.5"/><circle cx="6" cy="9.8" r="0.55" fill="#ccccf0"/><circle cx="10.45" cy="9.8" r="0.55" fill="#ccccf0"/><circle cx="14.9" cy="9.8" r="0.55" fill="#ccccf0"/><path d="M9.3,16.7 L11.7,16.7 L11.7,23.6 L9.3,23.6z" fill="#505050"/><path d="M9,19.5 L12,17.3" stroke="#e0e0e0" stroke-width="0.8"/><path d="M9,22.3 L12,20.1" stroke="#e0e0e0" stroke-width="0.8"/></g><text x="19.7" y="35.2" text-anchor="middle" font-size="12.6" fill="#3c3ccc" stroke="#3c3ccc" stroke-width="0.45" textLength="22.6" lengthAdjust="spacingAndGlyphs">M05</text></svg>
<div class="b" style="left:435px;top:392.2px;width:36.3px;height:36.6px"></div>
<svg class="s" style="left:435px;top:392.2px" width="36.3" height="36.6"><path d="M3,14 L11.6,18.5 L3,23z M34.2,14 L25.6,18.5 L34.2,23z" fill="#3c3ccc"/><text x="18.2" y="25.6" text-anchor="middle" font-size="19" fill="#3c3ccc" stroke="#3c3ccc" stroke-width="0.6" textLength="8.6" lengthAdjust="spacingAndGlyphs">0</text></svg>
<div class="b" style="left:475.5px;top:392.2px;width:36.5px;height:36.6px"></div>
<svg class="s" style="left:475.5px;top:392.2px" width="36.5" height="36.6"><path d="M16,2.5 H20.5 V4.5 L21.5,5 L23,18 L25.5,18 V20 L23,20 L23,24 Q23,25.5 21.5,25.5 L15,25.5 Q13.5,25.5 13.5,24 L13.5,20 L11,20 V18 L13.5,18 L15,5 L16,4.5z" fill="#3c3ccc"/><path d="M11,19 H25.5" stroke="#8888dd" stroke-width="0.7"/><text x="19.7" y="35.2" text-anchor="middle" font-size="12.6" fill="#3c3ccc" stroke="#3c3ccc" stroke-width="0.45" textLength="22.6" lengthAdjust="spacingAndGlyphs">M06</text></svg>
<div class="b" style="left:516px;top:392.2px;width:36.5px;height:36.6px"></div>
<svg class="s" style="left:516px;top:392.2px" width="36.5" height="36.6"><ellipse cx="5.8" cy="4.5" rx="3.3" ry="2.4" fill="url(#led)"/><path d="M2,9.5 H6.6 V15.8 L11,18.6 L9.2,21.8 L2,17.2z" fill="#8080d0"/><path d="M9.5,21 L17,19.5 M9,22.8 L16,22 M7.5,24.2 L13,24.5" stroke="#9090d4" stroke-width="0.8"/><g transform="translate(9.4,2.5) scale(0.9)"><path d="M0,0 H20.9 V3.4 L19,3.4 L19,5 L18,5 L18,7 L17.4,7 L17.4,14.5 Q17.4,16.7 15.2,16.7 L5.7,16.7 Q3.5,16.7 3.5,14.5 L3.5,7 L2.9,7 L2.9,5 L1.9,5 L1.9,3.4 L0,3.4z" fill="#3c3ccc"/><path d="M2.5,5.2 H18.4 M3,7.2 H18" stroke="#7070d8" stroke-width="0.5"/><circle cx="6" cy="9.8" r="0.55" fill="#ccccf0"/><circle cx="10.45" cy="9.8" r="0.55" fill="#ccccf0"/><circle cx="14.9" cy="9.8" r="0.55" fill="#ccccf0"/><path d="M9.3,16.7 L11.7,16.7 L11.7,23.6 L9.3,23.6z" fill="#505050"/><path d="M9,19.5 L12,17.3" stroke="#e0e0e0" stroke-width="0.8"/><path d="M9,22.3 L12,20.1" stroke="#e0e0e0" stroke-width="0.8"/></g><text x="19.7" y="35.2" text-anchor="middle" font-size="12.6" fill="#3c3ccc" stroke="#3c3ccc" stroke-width="0.45" textLength="22.6" lengthAdjust="spacingAndGlyphs">M07</text></svg>
<div class="b" style="left:556.5px;top:392.2px;width:36.3px;height:36.6px"></div>
<svg class="s" style="left:556.5px;top:392.2px" width="36.3" height="36.6"><ellipse cx="5.8" cy="4.5" rx="3.3" ry="2.4" fill="url(#led)"/><path d="M29.6,8.8 H33.8 V14.8 L27.2,19.6 L25.6,17.8 L29.6,14.6z" fill="#8080d0"/><path d="M25.9,19.4 Q23.4,23 24,23.8 Q25.9,25.6 27.8,23.8 Q28.4,23 25.9,19.4z" fill="#8080d0"/><g transform="translate(9.4,2.5) scale(0.9)"><path d="M0,0 H20.9 V3.4 L19,3.4 L19,5 L18,5 L18,7 L17.4,7 L17.4,14.5 Q17.4,16.7 15.2,16.7 L5.7,16.7 Q3.5,16.7 3.5,14.5 L3.5,7 L2.9,7 L2.9,5 L1.9,5 L1.9,3.4 L0,3.4z" fill="#3c3ccc"/><path d="M2.5,5.2 H18.4 M3,7.2 H18" stroke="#7070d8" stroke-width="0.5"/><circle cx="6" cy="9.8" r="0.55" fill="#ccccf0"/><circle cx="10.45" cy="9.8" r="0.55" fill="#ccccf0"/><circle cx="14.9" cy="9.8" r="0.55" fill="#ccccf0"/><path d="M9.3,16.7 L11.7,16.7 L11.7,23.6 L9.3,23.6z" fill="#505050"/><path d="M9,19.5 L12,17.3" stroke="#e0e0e0" stroke-width="0.8"/><path d="M9,22.3 L12,20.1" stroke="#e0e0e0" stroke-width="0.8"/></g><text x="19.7" y="35.2" text-anchor="middle" font-size="12.6" fill="#3c3ccc" stroke="#3c3ccc" stroke-width="0.45" textLength="22.6" lengthAdjust="spacingAndGlyphs">M08</text></svg>
<div class="b" style="left:597px;top:392.2px;width:36.5px;height:36.6px"></div>
<svg class="s" style="left:597px;top:392.2px" width="36.5" height="36.6"><path d="M2,9.5 H6.6 V15.8 L11,18.6 L9.2,21.8 L2,17.2z" fill="#8080d0"/><path d="M9.5,21 L17,19.5 M9,22.8 L16,22 M7.5,24.2 L13,24.5" stroke="#9090d4" stroke-width="0.8"/><path d="M29.6,8.8 H33.8 V14.8 L27.2,19.6 L25.6,17.8 L29.6,14.6z" fill="#8080d0"/><path d="M25.9,19.4 Q23.4,23 24,23.8 Q25.9,25.6 27.8,23.8 Q28.4,23 25.9,19.4z" fill="#8080d0"/><g transform="translate(7.6,2.5) scale(0.9)"><path d="M0,0 H20.9 V3.4 L19,3.4 L19,5 L18,5 L18,7 L17.4,7 L17.4,14.5 Q17.4,16.7 15.2,16.7 L5.7,16.7 Q3.5,16.7 3.5,14.5 L3.5,7 L2.9,7 L2.9,5 L1.9,5 L1.9,3.4 L0,3.4z" fill="#3c3ccc"/><path d="M2.5,5.2 H18.4 M3,7.2 H18" stroke="#7070d8" stroke-width="0.5"/><circle cx="6" cy="9.8" r="0.55" fill="#ccccf0"/><circle cx="10.45" cy="9.8" r="0.55" fill="#ccccf0"/><circle cx="14.9" cy="9.8" r="0.55" fill="#ccccf0"/><path d="M9.3,16.7 L11.7,16.7 L11.7,23.6 L9.3,23.6z" fill="#505050"/><path d="M9,19.5 L12,17.3" stroke="#e0e0e0" stroke-width="0.8"/><path d="M9,22.3 L12,20.1" stroke="#e0e0e0" stroke-width="0.8"/></g><path d="M2.7,11.2 l4.6,4.6 M2.7,15.8 l4.6,-4.6" stroke="#f01010" stroke-width="2"/><path d="M29.4,10.5 l4.6,4.6 M29.4,15.1 l4.6,-4.6" stroke="#f01010" stroke-width="2"/><text x="19.7" y="35.2" text-anchor="middle" font-size="12.6" fill="#3c3ccc" stroke="#3c3ccc" stroke-width="0.45" textLength="22.6" lengthAdjust="spacingAndGlyphs">M09</text></svg>
<div class="p" style="left:647.6px;top:346.3px;width:119.5px;height:95.6px"></div>
<div class="b" style="left:654px;top:352.1px;width:34px;height:33.2px"></div>
<svg class="s" style="left:654px;top:352.1px" width="34" height="33.2"><rect x="2.8" y="3.2" width="4.6" height="25.8" fill="#3c3ccc"/><path d="M7.3,16.2 L31.6,3.2 L31.6,29.3z" fill="#3c3ccc"/></svg>
<div class="b" style="left:689.9px;top:352.1px;width:33.7px;height:33.2px"></div>
<svg class="s" style="left:689.9px;top:352.1px" width="33.7" height="33.2"><path d="M4.7,11.9 L17.1,4.1 L17.1,19.9z" fill="#3c3ccc"/><path d="M15,11.9 H21 Q28.7,11.9 28.7,19.6 Q28.7,27.4 21,27.4 H8.1" fill="none" stroke="#3c3ccc" stroke-width="4.2"/></svg>
<div class="b" style="left:726.1px;top:352.1px;width:34.2px;height:33.2px"></div>
<svg class="s" style="left:726.1px;top:352.1px" width="34.2" height="33.2"><rect x="2.65" y="3.1" width="4.45" height="25.8" fill="#3c3ccc"/><path d="M9.1,3.4 L31.8,16.2 L9.1,29.8z" fill="#3c3ccc"/></svg>
<div class="b" style="left:654px;top:387.3px;width:52px;height:51.3px"></div>
<svg class="s" style="left:654px;top:387.3px" width="52" height="51.3"><path d="M17.09,4.05 L35.31,4.05 L48.20,16.94 L48.20,35.16 L35.31,48.05 L17.09,48.05 L4.20,35.16 L4.20,16.94z" fill="#b00000"/><path d="M17.79,5.75 L34.61,5.75 L46.50,17.64 L46.50,34.46 L34.61,46.35 L17.79,46.35 L5.90,34.46 L5.90,17.64z" fill="none" stroke="#f4f4f4" stroke-width="0.9"/><path d="M18.00,6.25 L34.40,6.25 L46.00,17.85 L46.00,34.25 L34.40,45.85 L18.00,45.85 L6.40,34.25 L6.40,17.85z" fill="url(#stopg)"/><text x="26.2" y="31.7" text-anchor="middle" font-size="15.2" font-weight="bold" fill="#fff" textLength="33" lengthAdjust="spacingAndGlyphs">STOP</text></svg>
<div class="b" style="left:708.5px;top:387.3px;width:51.8px;height:51.3px"></div>
<svg class="s" style="left:708.5px;top:387.3px" width="51.8" height="51.3"><path d="M6.5,3.5 Q5.4,2.8 5.4,4.2 L5.4,46.5 Q5.4,47.9 6.6,47.2 L43.6,25.8 Q44.8,25.1 43.6,24.4z" fill="#3c3ccc"/></svg>
<svg class="s" style="left:0px;top:0px" width="800" height="477"><g font-size="9.6" fill="#f2f2f2" stroke="#f2f2f2" stroke-width="0.15"><text x="634.2" y="250.8" text-anchor="middle" textLength="4.8" lengthAdjust="spacingAndGlyphs">0</text><text x="710" y="241.6" text-anchor="middle" textLength="4.8" lengthAdjust="spacingAndGlyphs">0</text><text x="634.4" y="323.4" text-anchor="middle" textLength="4.8" lengthAdjust="spacingAndGlyphs">0</text><text x="634.2" y="233.2" text-anchor="middle" font-size="12" stroke-width="0.45">∞</text></g></svg>
<svg id="txt" class="s" style="left:0;top:0;font-family:'Liberation Sans';will-change:transform" width="800" height="477"><text id="t0" x="222.90" y="26.25" font-size="6.43" fill="#d2d6da" textLength="353.60" lengthAdjust="spacingAndGlyphs">(15:47:17) myCNC control software. Ver:1.88.3961- [/home/sk/DNC//CUSTOMERS/INIK/2020/Метчик/002-THREAD.NC]</text><text id="t1" x="653.00" y="47.90" font-size="8.29" fill="#5050f0" font-weight="bold" textLength="17.20" lengthAdjust="spacingAndGlyphs">G54:</text><text id="t2" x="653.00" y="80.30" font-size="8.29" fill="#5050f0" font-weight="bold" textLength="17.20" lengthAdjust="spacingAndGlyphs">G54:</text><text id="t3" x="653.00" y="113.30" font-size="8.43" fill="#5050f0" font-weight="bold" textLength="17.20" lengthAdjust="spacingAndGlyphs">G54:</text><text id="t4" x="695.75" y="48.50" font-size="6.43" fill="#e2e2e2" stroke="#e2e2e2" stroke-width="0.18" textLength="12.35" lengthAdjust="spacingAndGlyphs">Tool</text><text id="t5" x="689.75" y="59.00" font-size="8.52" fill="#ffffff" stroke="#ffffff" stroke-width="0.18" textLength="24.25" lengthAdjust="spacingAndGlyphs">empty</text><text id="t6" x="653.00" y="65.40" font-size="7.57" fill="#dede14" stroke="#dede14" stroke-width="0.18" textLength="43.50" lengthAdjust="spacingAndGlyphs">1048575.462</text><text id="t7" x="733.90" y="51.90" font-size="11.29" fill="#ff1c1c" stroke="#ff1c1c" stroke-width="0.18" textLength="29.50" lengthAdjust="spacingAndGlyphs">16.492</text><text id="t8" x="744.90" y="65.75" font-size="8.07" fill="#dede14" stroke="#dede14" stroke-width="0.18" textLength="18.50" lengthAdjust="spacingAndGlyphs">0.000</text><text id="t9" x="691.70" y="71.40" font-size="6.43" fill="#e2e2e2" stroke="#e2e2e2" stroke-width="0.18" textLength="20.30" lengthAdjust="spacingAndGlyphs">Length</text><text id="t10" x="694.60" y="81.80" font-size="8.71" fill="#ffffff" stroke="#ffffff" stroke-width="0.18" textLength="20.60" lengthAdjust="spacingAndGlyphs">0.000</text><text id="t11" x="724.40" y="84.10" font-size="11.29" fill="#ff1c1c" stroke="#ff1c1c" stroke-width="0.18" textLength="39.00" lengthAdjust="spacingAndGlyphs">-281.628</text><text id="t12" x="687.10" y="91.80" font-size="6.14" fill="#e2e2e2" stroke="#e2e2e2" stroke-width="0.18" textLength="29.10" lengthAdjust="spacingAndGlyphs">Correct. Z</text><text id="t13" x="658.40" y="98.40" font-size="7.86" fill="#dede14" stroke="#dede14" stroke-width="0.18" textLength="18.80" lengthAdjust="spacingAndGlyphs">0.000</text><text id="t14" x="744.90" y="98.40" font-size="7.86" fill="#dede14" stroke="#dede14" stroke-width="0.18" textLength="18.50" lengthAdjust="spacingAndGlyphs">0.000</text><text id="t15" x="691.70" y="103.00" font-size="8.43" fill="#ffffff" stroke="#ffffff" stroke-width="0.18" textLength="20.50" lengthAdjust="spacingAndGlyphs">0.000</text><text id="t16" x="686.70" y="113.80" font-size="6.29" fill="#e2e2e2" stroke="#e2e2e2" stroke-width="0.18" textLength="30.20" lengthAdjust="spacingAndGlyphs">Correct. R</text><text id="t17" x="735.60" y="116.80" font-size="10.57" fill="#ff1c1c" stroke="#ff1c1c" stroke-width="0.18" textLength="27.60" lengthAdjust="spacingAndGlyphs">-4.000</text><text id="t18" x="691.00" y="124.90" font-size="8.71" fill="#ffffff" stroke="#ffffff" stroke-width="0.18" textLength="21.30" lengthAdjust="spacingAndGlyphs">0.000</text><text id="t19" x="658.30" y="131.10" font-size="8.14" fill="#dede14" stroke="#dede14" stroke-width="0.18" textLength="18.80" lengthAdjust="spacingAndGlyphs">0.010</text><text id="t20" x="744.80" y="131.20" font-size="8.00" fill="#dede14" stroke="#dede14" stroke-width="0.18" textLength="18.40" lengthAdjust="spacingAndGlyphs">0.000</text><text id="t21" x="685.00" y="134.60" font-size="7.00" fill="#e2e2e2" stroke="#e2e2e2" stroke-width="0.18" textLength="33.20" lengthAdjust="spacingAndGlyphs">Flood,[ml/hr]</text><text id="t22" x="728.40" y="149.40" font-size="10.71" fill="#ff1c1c" stroke="#ff1c1c" stroke-width="0.18" textLength="34.80" lengthAdjust="spacingAndGlyphs">3911.90</text><text id="t23" x="695.50" y="151.00" font-size="8.29" fill="#ffffff" stroke="#ffffff" stroke-width="0.18" textLength="12.40" lengthAdjust="spacingAndGlyphs">500</text><text id="t24" x="658.00" y="153.10" font-size="8.86" fill="#dede14" stroke="#dede14" stroke-width="0.18" textLength="17.40" lengthAdjust="spacingAndGlyphs">0.00!</text><text id="t25" x="749.00" y="163.70" font-size="7.86" fill="#dede14" stroke="#dede14" stroke-width="0.18" textLength="14.20" lengthAdjust="spacingAndGlyphs">0.00</text><text id="t26" x="657.70" y="167.50" font-size="8.71" fill="#303030" stroke="#303030" stroke-width="0.18" textLength="22.50" lengthAdjust="spacingAndGlyphs">Values</text><text id="t27" x="694.80" y="167.50" font-size="8.71" fill="#303030" stroke="#303030" stroke-width="0.18" textLength="17.30" lengthAdjust="spacingAndGlyphs">Error</text><text id="t28" x="56.60" y="303.00" font-size="6.57" fill="#e2e2e2" stroke="#e2e2e2" stroke-width="0.18" textLength="55.70" lengthAdjust="spacingAndGlyphs">Jog over speed,[%]</text><text id="t29" x="78.90" y="325.10" font-size="8.14" fill="#ffffff" stroke="#ffffff" stroke-width="0.18" textLength="11.80" lengthAdjust="spacingAndGlyphs">100</text><text id="t30" x="167.00" y="303.00" font-size="6.57" fill="#e2e2e2" stroke="#e2e2e2" stroke-width="0.18" textLength="45.90" lengthAdjust="spacingAndGlyphs">Over Speed,[%]</text><text id="t31" x="184.10" y="325.10" font-size="8.14" fill="#ffffff" stroke="#ffffff" stroke-width="0.18" textLength="11.80" lengthAdjust="spacingAndGlyphs">100</text><text id="t32" x="267.00" y="304.00" font-size="7.14" fill="#e2e2e2" stroke="#e2e2e2" stroke-width="0.18" textLength="63.00" lengthAdjust="spacingAndGlyphs">Spindle Speed, [rpm]</text><text id="t33" x="292.80" y="325.00" font-size="7.86" fill="#ffffff" stroke="#ffffff" stroke-width="0.18" textLength="12.00" lengthAdjust="spacingAndGlyphs">600</text><text id="t34" x="366.25" y="305.00" font-size="7.14" fill="#e2e2e2" stroke="#e2e2e2" stroke-width="0.18" textLength="55.00" lengthAdjust="spacingAndGlyphs">Tool Length, [mm]</text><text id="t35" x="433.75" y="305.00" font-size="6.43" fill="#ffffff" stroke="#ffffff" stroke-width="0.18" textLength="16.85" lengthAdjust="spacingAndGlyphs">0.000</text><text id="t36" x="408.10" y="317.75" font-size="7.14" fill="#e2e2e2" stroke="#e2e2e2" stroke-width="0.18" textLength="13.15" lengthAdjust="spacingAndGlyphs">Tool</text><text id="t37" x="428.75" y="318.40" font-size="8.33" fill="#ffffff" stroke="#ffffff" stroke-width="0.18" textLength="21.85" lengthAdjust="spacingAndGlyphs">empty</text><text id="t38" x="369.75" y="331.50" font-size="7.14" fill="#e2e2e2" stroke="#e2e2e2" stroke-width="0.18" textLength="51.50" lengthAdjust="spacingAndGlyphs">Z correction, mm</text><text id="t39" x="433.75" y="331.50" font-size="6.79" fill="#ffffff" stroke="#ffffff" stroke-width="0.18" textLength="16.85" lengthAdjust="spacingAndGlyphs">0.000</text><text id="t40" x="131.00" y="358.90" font-size="6.71" fill="#ececec" stroke="#ececec" stroke-width="0.18" textLength="18.80" lengthAdjust="spacingAndGlyphs">Spindle</text><text id="t41" x="117.10" y="372.00" font-size="6.71" fill="#ececec" stroke="#ececec" stroke-width="0.18" textLength="32.70" lengthAdjust="spacingAndGlyphs">Spindle CCW</text><text id="t42" x="138.80" y="385.60" font-size="6.71" fill="#ececec" stroke="#ececec" stroke-width="0.18" textLength="11.00" lengthAdjust="spacingAndGlyphs">Mist</text><text id="t43" x="136.00" y="399.30" font-size="6.86" fill="#ececec" stroke="#ececec" stroke-width="0.18" textLength="13.80" lengthAdjust="spacingAndGlyphs">Flood</text><text id="t44" x="194.70" y="358.90" font-size="6.43" fill="#ececec" stroke="#ececec" stroke-width="0.18" textLength="20.20" lengthAdjust="spacingAndGlyphs">Home X</text><text id="t45" x="194.70" y="372.30" font-size="6.43" fill="#ececec" stroke="#ececec" stroke-width="0.18" textLength="20.20" lengthAdjust="spacingAndGlyphs">Home Y</text><text id="t46" x="194.70" y="385.70" font-size="6.43" fill="#ececec" stroke="#ececec" stroke-width="0.18" textLength="20.20" lengthAdjust="spacingAndGlyphs">Home Z</text><text id="t47" x="194.20" y="399.10" font-size="6.43" fill="#ececec" stroke="#ececec" stroke-width="0.18" textLength="20.70" lengthAdjust="spacingAndGlyphs">Home A</text><text id="t48" x="43.60" y="366.80" font-size="12.00" fill="#4444d4" stroke="#4444d4" stroke-width="0.35" textLength="23.10" lengthAdjust="spacingAndGlyphs">Map</text><text id="t49" x="34.40" y="389.00" font-size="12.29" fill="#4444d4" stroke="#4444d4" stroke-width="0.35" textLength="35.60" lengthAdjust="spacingAndGlyphs">G-code</text><text id="t50" x="47.80" y="412.20" font-size="12.00" fill="#4444d4" stroke="#4444d4" stroke-width="0.35" textLength="17.30" lengthAdjust="spacingAndGlyphs">Mill</text><text id="t51" x="47.80" y="434.90" font-size="12.29" fill="#4444d4" stroke="#4444d4" stroke-width="0.35" textLength="19.10" lengthAdjust="spacingAndGlyphs">Log</text><text id="t52" x="273.90" y="358.70" font-size="6.29" fill="#e2e2e2" stroke="#e2e2e2" stroke-width="0.18" textLength="33.10" lengthAdjust="spacingAndGlyphs">Flood,[ml/hr]</text><text id="t53" x="284.30" y="378.30" font-size="8.29" fill="#ffffff" stroke="#ffffff" stroke-width="0.18" textLength="12.60" lengthAdjust="spacingAndGlyphs">500</text><text id="t54" x="345.10" y="211.60" font-size="12.29" fill="#1e1e1e" stroke="#1e1e1e" stroke-width="0.18" textLength="110.10" lengthAdjust="spacingAndGlyphs">Manual Tool Change</text><text id="t55" x="356.20" y="236.10" font-size="14.43" fill="#1e1e1e" stroke="#1e1e1e" stroke-width="0.18" textLength="87.60" lengthAdjust="spacingAndGlyphs">Insert Tool 10</text><text id="t56" x="79.90" y="283.80" font-size="7.86" fill="#a9a9b2" stroke="#a9a9b2" stroke-width="0.18" textLength="9.20" lengthAdjust="spacingAndGlyphs">G0</text><text id="t57" x="99.80" y="283.80" font-size="7.86" fill="#a9a9b2" stroke="#a9a9b2" stroke-width="0.18" textLength="13.30" lengthAdjust="spacingAndGlyphs">G18</text><text id="t58" x="121.00" y="283.80" font-size="7.86" fill="#a9a9b2" stroke="#a9a9b2" stroke-width="0.18" textLength="13.80" lengthAdjust="spacingAndGlyphs">G90</text><text id="t59" x="142.80" y="283.80" font-size="7.86" fill="#a9a9b2" stroke="#a9a9b2" stroke-width="0.18" textLength="13.10" lengthAdjust="spacingAndGlyphs">G21</text><text id="t60" x="164.10" y="283.80" font-size="7.86" fill="#a9a9b2" stroke="#a9a9b2" stroke-width="0.18" textLength="13.70" lengthAdjust="spacingAndGlyphs">G40</text><text id="t61" x="185.90" y="283.80" font-size="7.86" fill="#a9a9b2" stroke="#a9a9b2" stroke-width="0.18" textLength="13.30" lengthAdjust="spacingAndGlyphs">G43</text></svg>
</body></html>
